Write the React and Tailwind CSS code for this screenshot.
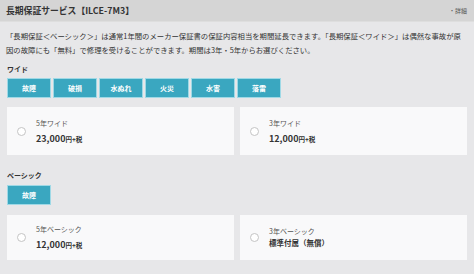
import React from 'react';

const font = { fontFamily: '"Noto Sans CJK JP", "Noto Sans", sans-serif' };

const wideTags = ['故障', '破損', '水ぬれ', '火災', '水害', '落雷'];

function Tag({ label }) {
  return (
    <div className="w-[44px] h-[20px] flex items-center justify-center bg-[#3aa7c0] border border-[#9fd9e6] text-white text-[7px] font-bold">
      {label}
    </div>
  );
}

function PlanCard({ name, price, unit, text }) {
  return (
    <div className="flex-1 flex items-center bg-[#f9f9fa] pl-[10px]">
      <div className="w-[9px] h-[9px] rounded-full border border-[#c4c4c4] bg-white" />
      <div className="ml-[10px] flex flex-col text-[#333]">
        <span className="text-[7px] leading-[11px] text-[#555]">{name}</span>
        {text ? (
          <span className="text-[7.5px] leading-[12px] font-bold">{text}</span>
        ) : (
          <span className="leading-[12px] font-bold">
            <span className="text-[9px]">{price}</span>
            <span className="text-[6.5px]">{unit}</span>
          </span>
        )}
      </div>
    </div>
  );
}

export default function App() {
  return (
    <div className="w-[474px] h-[274px] bg-[#e7e7e9] overflow-hidden" style={font}>
      {/* header */}
      <div className="h-[22px] flex items-center justify-between px-[6px] bg-[#d5d5d5] border-b border-[#dedede]">
        <h1 className="text-[8.8px] font-bold text-[#333]">長期保証サービス【ILCE-7M3】</h1>
        <span className="text-[6px] text-[#555] mr-[1px]">・詳細</span>
      </div>

      <p className="px-[6px] pt-[7px] text-[7.35px] leading-[14px] text-[#333] whitespace-nowrap">
        「長期保証＜ベーシック＞」は通常1年間のメーカー保証書の保証内容相当を期間延長できます。「長期保証＜ワイド＞」は偶然な事故が原
        <br />
        因の故障にも「無料」で修理を受けることができます。期間は3年・5年からお選びください。
      </p>

      <div className="px-[7px]">
        <h2 className="mt-[7px] text-[7px] leading-[10px] font-bold text-[#333]">ワイド</h2>
        <div className="mt-[4px] flex gap-[2px]">
          {wideTags.map(t => <Tag key={t} label={t} />)}
        </div>
        <div className="mt-[9px] h-[48px] flex gap-[6px]">
          <PlanCard name="5年ワイド" price="23,000" unit="円+税" />
          <PlanCard name="3年ワイド" price="12,000" unit="円+税" />
        </div>

        <h2 className="mt-[15px] text-[7px] leading-[10px] font-bold text-[#333]">ベーシック</h2>
        <div className="mt-[5px] flex">
          <Tag label="故障" />
        </div>
        <div className="mt-[10px] h-[45px] flex gap-[6px]">
          <PlanCard name="5年ベーシック" price="12,000" unit="円+税" />
          <PlanCard name="3年ベーシック" text="標準付属（無償）" />
        </div>
      </div>
    </div>
  );
}
